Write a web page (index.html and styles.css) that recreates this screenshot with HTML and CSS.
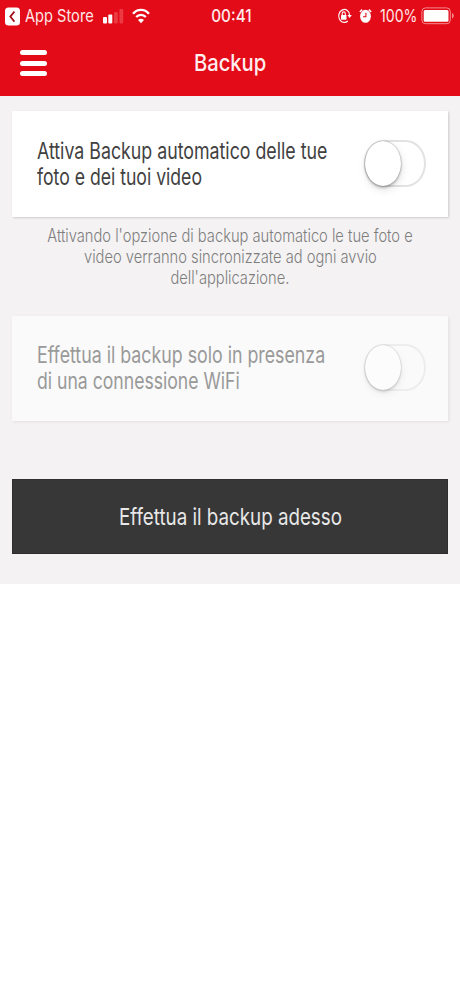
FILE: index.html
```html
<!DOCTYPE html>
<html lang="it">
<head>
<meta charset="utf-8">
<title>Backup</title>
<link rel="stylesheet" href="styles.css">
</head>
<body>
<div class="app">
  <header class="header">
    <div class="status">
      <div class="status-left">
        <svg class="back" width="16" height="19" viewBox="0 0 16 19"><rect width="15" height="18" y=".5" rx="3.5" fill="#fff"/><path d="M9.4 4.6 5.3 9.6l4.1 5" fill="none" stroke="#a50d1a" stroke-width="1.7"/></svg>
        <span class="store"><span class="line">App Store</span></span>
        <svg class="signal" width="21" height="16" viewBox="0 0 21 16"><rect x="0" y="9" width="4" height="6.5" rx="1" fill="#fff"/><rect x="5.3" y="6.500" width="4" height="9" rx="1" fill="#fff"/><rect x="11" y="4" width="3.8" height="11.5" rx="1" fill="#ec3a43"/><rect x="16.4" y="1" width="3.8" height="14.5" rx="1" fill="#ec3a43"/></svg>
        <svg class="wifi" width="18" height="16" viewBox="0 0 18 16"><g fill="none" stroke="#fff" stroke-width="2.3"><path d="M1 5.7C5.400.5 12.600.5 17 5.7"/><path d="M4.200 9.100c2.700-3.100 6.900-3.100 9.600 0"/></g><path d="M9 15.200 6 11.900c1.700-1.700 4.300-1.700 6 0Z" fill="#fff"/></svg>
      </div>
      <div class="clock"><span class="line">00:41</span></div>
      <div class="status-right">
        <svg class="lock" width="15" height="16" viewBox="0 0 15 16"><path d="M10.300 2.500A5.500 6.500 0 1 0 10.800 13M10.300 2.500Q12.600 4 12.600 7.500" fill="none" stroke="#fff" stroke-width="1.200"/><path d="M10.400 7h4.400l-2.200 3Z" fill="#fff"/><rect x="4" y="7" width="5.500" height="4.700" rx=".6" fill="#fff"/><path d="M5.200 7V5.700a1.550 1.800 0 0 1 3.100 0V7" fill="none" stroke="#fff" stroke-width="1.100"/></svg>
        <svg class="alarm" width="13" height="16" viewBox="0 0 13 16"><ellipse cx="6.500" cy="8.300" rx="5.400" ry="6.500" fill="#fff"/><path d="M.8 4 3.200 1.600M12.200 4 9.800 1.600" stroke="#fff" stroke-width="1.500"/><path d="M6.900 4.700v4.100H4" fill="none" stroke="#e30b17" stroke-width="1.100"/></svg>
        <span class="percent"><span class="line">100%</span></span>
        <svg class="battery" width="33" height="18" viewBox="0 0 33 18"><rect x=".9" y=".9" width="28.400" height="15.800" rx="3.600" fill="none" stroke="#f58a8e" stroke-width="1"/><rect x="2.700" y="2.900" width="24.800" height="11.800" rx="1.500" fill="#fff"/><path d="M31 6v5.500q1.800-.8 1.800-2.750T31 6Z" fill="#f58a8e"/></svg>
      </div>
    </div>
    <div class="nav">
      <div class="menu"><i></i><i></i><i></i></div>
      <h1 class="title"><span class="line">Backup</span></h1>
    </div>
  </header>
  <main class="main">
    <section class="card">
      <p class="label"><span class="line">Attiva Backup automatico delle tue</span> <span class="line">foto e dei tuoi video</span></p>
      <div class="switch"><div class="knob"></div></div>
    </section>
    <p class="note"><span class="line">Attivando l'opzione di backup automatico le tue foto e</span> <span class="line">video verranno sincronizzate ad ogni avvio</span> <span class="line">dell'applicazione.</span></p>
    <section class="card disabled">
      <p class="label"><span class="line">Effettua il backup solo in presenza</span> <span class="line">di una connessione WiFi</span></p>
      <div class="switch"><div class="knob"></div></div>
    </section>
    <div class="button"><span class="line">Effettua il backup adesso</span></div>
  </main>
</div>
</body>
</html>
```
FILE: styles.css
```css
* { box-sizing: border-box; }
body { margin: 0; background: #fff; font-family: Inter, "Liberation Sans", sans-serif; }
p, h1 { margin: 0; }
svg { display: block; flex: none; }
.app { width: 460px; height: 584px; background: #f4f2f3; }

/* Condensed text: each line is narrowed horizontally */
.line { display: block; white-space: nowrap; transform: scaleX(.79); transform-origin: 0 50%; }

.header { height: 96px; background: #e30b17; color: #fff; }
.status { display: grid; grid-template-columns: 1fr 60px 1fr; height: 32px; align-items: center; }
.status-left, .status-right { display: flex; align-items: center; }
.status-left { padding-left: 5px; }
.status-right { justify-content: flex-end; padding-right: 6px; }
.store { width: 78px; padding-left: 4px; font-size: 17px; line-height: 32px; color: #ffe6e6; }
.store .line { transform: scaleX(.86); }
.signal { margin-left: 4px; }
.wifi { margin-left: 8px; margin-bottom: 1px; }
.clock { display: flex; justify-content: center; font-size: 17px; font-weight: 500; padding-left: 3px; color: #ffeaea; }
.clock .line { transform: scaleX(.9); transform-origin: 50% 50%; }
.alarm { margin-left: 7px; }
.lock, .alarm { margin-bottom: 1px; }
.percent { width: 41px; margin-left: 8px; font-size: 17px; color: #ffe6e6; }
.percent .line { transform: scaleX(.83); }

.nav { display: grid; grid-template-columns: 60px 1fr 60px; align-items: center; height: 62px; }
.menu { display: flex; flex-direction: column; gap: 5.5px; width: 27px; margin-left: 20px; }
.menu i { height: 5px; border-radius: 2.5px; background: #fff; }
.title { display: flex; justify-content: center; font-size: 23.5px; font-weight: 500; line-height: 30px; color: #fee; }
.title .line { transform: scaleX(.86); transform-origin: 50% 50%; }

.main { padding: 15px 12px 0; }
.card { display: flex; justify-content: space-between; height: 106px; padding: 27px 22px 0 25px; background: #fff; box-shadow: 1px 1px 2px rgba(0, 0, 0, .16); }
.label { width: 300px; font-size: 22.5px; line-height: 26px; color: #414141; }
.label .line + .line { transform: scaleX(.783); }
.switch { width: 62px; height: 47px; margin-top: 2px; border: 2px solid #e2e2e2; border-radius: 20px / 23.5px; background: #fff; }
.knob { width: 36px; height: 45px; margin: -1px 0 0 -1px; border-radius: 50%; background: #fff; box-shadow: 0 0 1.5px rgba(0, 0, 0, .45), 0 2px 3px rgba(0, 0, 0, .22), 1px 4px 10px rgba(0, 0, 0, .1); }

.note { display: flex; flex-direction: column; align-items: center; margin-top: 8px; font-size: 18px; font-weight: 300; line-height: 21.2px; color: #7d7d7d; }
.note .line { transform: scaleX(.816); transform-origin: 50% 50%; }

.disabled { height: 105px; margin-top: 27.4px; padding-top: 26.4px; background: #fafafa; box-shadow: 1px 1px 3px rgba(0, 0, 0, .08); }
.disabled .label { color: #999; }
.disabled .switch { background: #fafafa; border-color: #ededed; }
.disabled .knob { background: #fcfcfc; box-shadow: 0 0 1.5px rgba(0, 0, 0, .26), 0 2px 3px rgba(0, 0, 0, .12), 1px 4px 10px rgba(0, 0, 0, .05); }

.button { display: flex; align-items: center; justify-content: center; height: 75px; margin-top: 58px; background: #373737; border: 1px solid #2e2e2e; color: #e8e8e8; font-size: 23.3px; }
.button .line { transform: scaleX(.805); transform-origin: 50% 50%; }
```
